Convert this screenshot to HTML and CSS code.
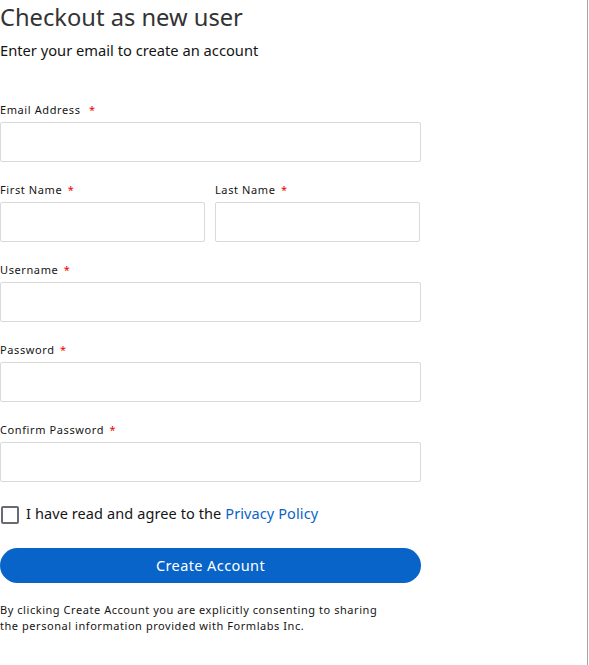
FILE: index.html
```html
<!DOCTYPE html>
<html>
<head>
<meta charset="utf-8">
<link rel="stylesheet" href="styles.css">
</head>
<body>
<div class="page">
  <main class="form-wrap">
    <h1 class="title">Checkout as new user</h1>
    <p class="subtitle">Enter your email to create an account</p>

    <div class="field field-first">
      <label class="label">Email Address <span class="req">*</span></label>
      <input class="input" type="text">
    </div>

    <div class="row">
      <div class="field">
        <label class="label">First Name <span class="req">*</span></label>
        <input class="input" type="text">
      </div>
      <div class="field">
        <label class="label">Last Name <span class="req">*</span></label>
        <input class="input" type="text">
      </div>
    </div>

    <div class="field">
      <label class="label">Username <span class="req">*</span></label>
      <input class="input" type="text">
    </div>

    <div class="field">
      <label class="label">Password <span class="req">*</span></label>
      <input class="input" type="password">
    </div>

    <div class="field">
      <label class="label">Confirm Password <span class="req">*</span></label>
      <input class="input" type="password">
    </div>

    <label class="agree">
      <span class="checkbox"></span>
      <span>I have read and agree to the <a class="link" href="#">Privacy Policy</a></span>
    </label>

    <button class="btn" type="button">Create Account</button>

    <p class="note">By clicking Create Account you are explicitly consenting to sharing<br>the personal information provided with Formlabs Inc.</p>
  </main>
  <div class="divider"></div>
</div>
</body>
</html>
```

FILE: styles.css
```css
* { box-sizing: border-box; }
html, body { margin: 0; padding: 0; background: #fff; }
body {
  font-family: "Noto Sans", "Open Sans", sans-serif;
  color: #151515;
}
.page {
  display: flex;
  width: 589px;
  height: 665px;
}
.form-wrap {
  width: 421px;
  display: flex;
  flex-direction: column;
}
.divider {
  margin-left: auto;
  margin-right: 1px;
  width: 1px;
  background: #a3a3ab;
  height: 100%;
}
.title {
  margin: 0;
  font-size: 23.7px;
  font-weight: 400;
  line-height: 34px;
  color: #333;
}
.subtitle {
  margin: -1px 0 0;
  font-size: 14.7px;
  line-height: 34px;
}
.field { margin-top: 20px; display: flex; flex-direction: column; }
.field-first { margin-top: 35px; }
.row { display: flex; gap: 10px; width: 420px; }
.row .field { flex: 1 1 0; min-width: 0; }
.label {
  font-size: 11px;
  line-height: 16px;
  margin-bottom: 4px;
  color: #151515;
  letter-spacing: 0.6px;
}
.req { color: #e00; margin-left: 2px; }
.field-first .req { margin-left: 5px; }
.input {
  display: block;
  width: 100%;
  height: 40px;
  border: 1px solid #d9d9d9;
  border-radius: 2px;
  margin: 0;
  padding: 0 8px;
  background: #fff;
  font: inherit;
}
.agree {
  display: flex;
  align-items: center;
  gap: 7px;
  margin-top: 23px;
  margin-left: 1px;
  font-size: 14.5px;
  line-height: 20px;
  letter-spacing: 0.1px;
}
.agree > span:last-child { position: relative; top: -2px; }
.checkbox {
  width: 18px;
  height: 18px;
  border: 2px solid #6a6a74;
  border-radius: 2px;
  flex: none;
}
.link { color: #0a64c8; text-decoration: none; }
.btn {
  margin-top: 23px;
  height: 35px;
  width: 421px;
  border: none;
  border-radius: 18px;
  background: #0864c8;
  color: #fff;
  font: inherit;
  font-size: 14.5px;
  letter-spacing: 0.4px;
  padding: 0 0 2px;
}
.note {
  margin: 19px 0 0;
  font-size: 11px;
  line-height: 16px;
  letter-spacing: 0.55px;
}
```
